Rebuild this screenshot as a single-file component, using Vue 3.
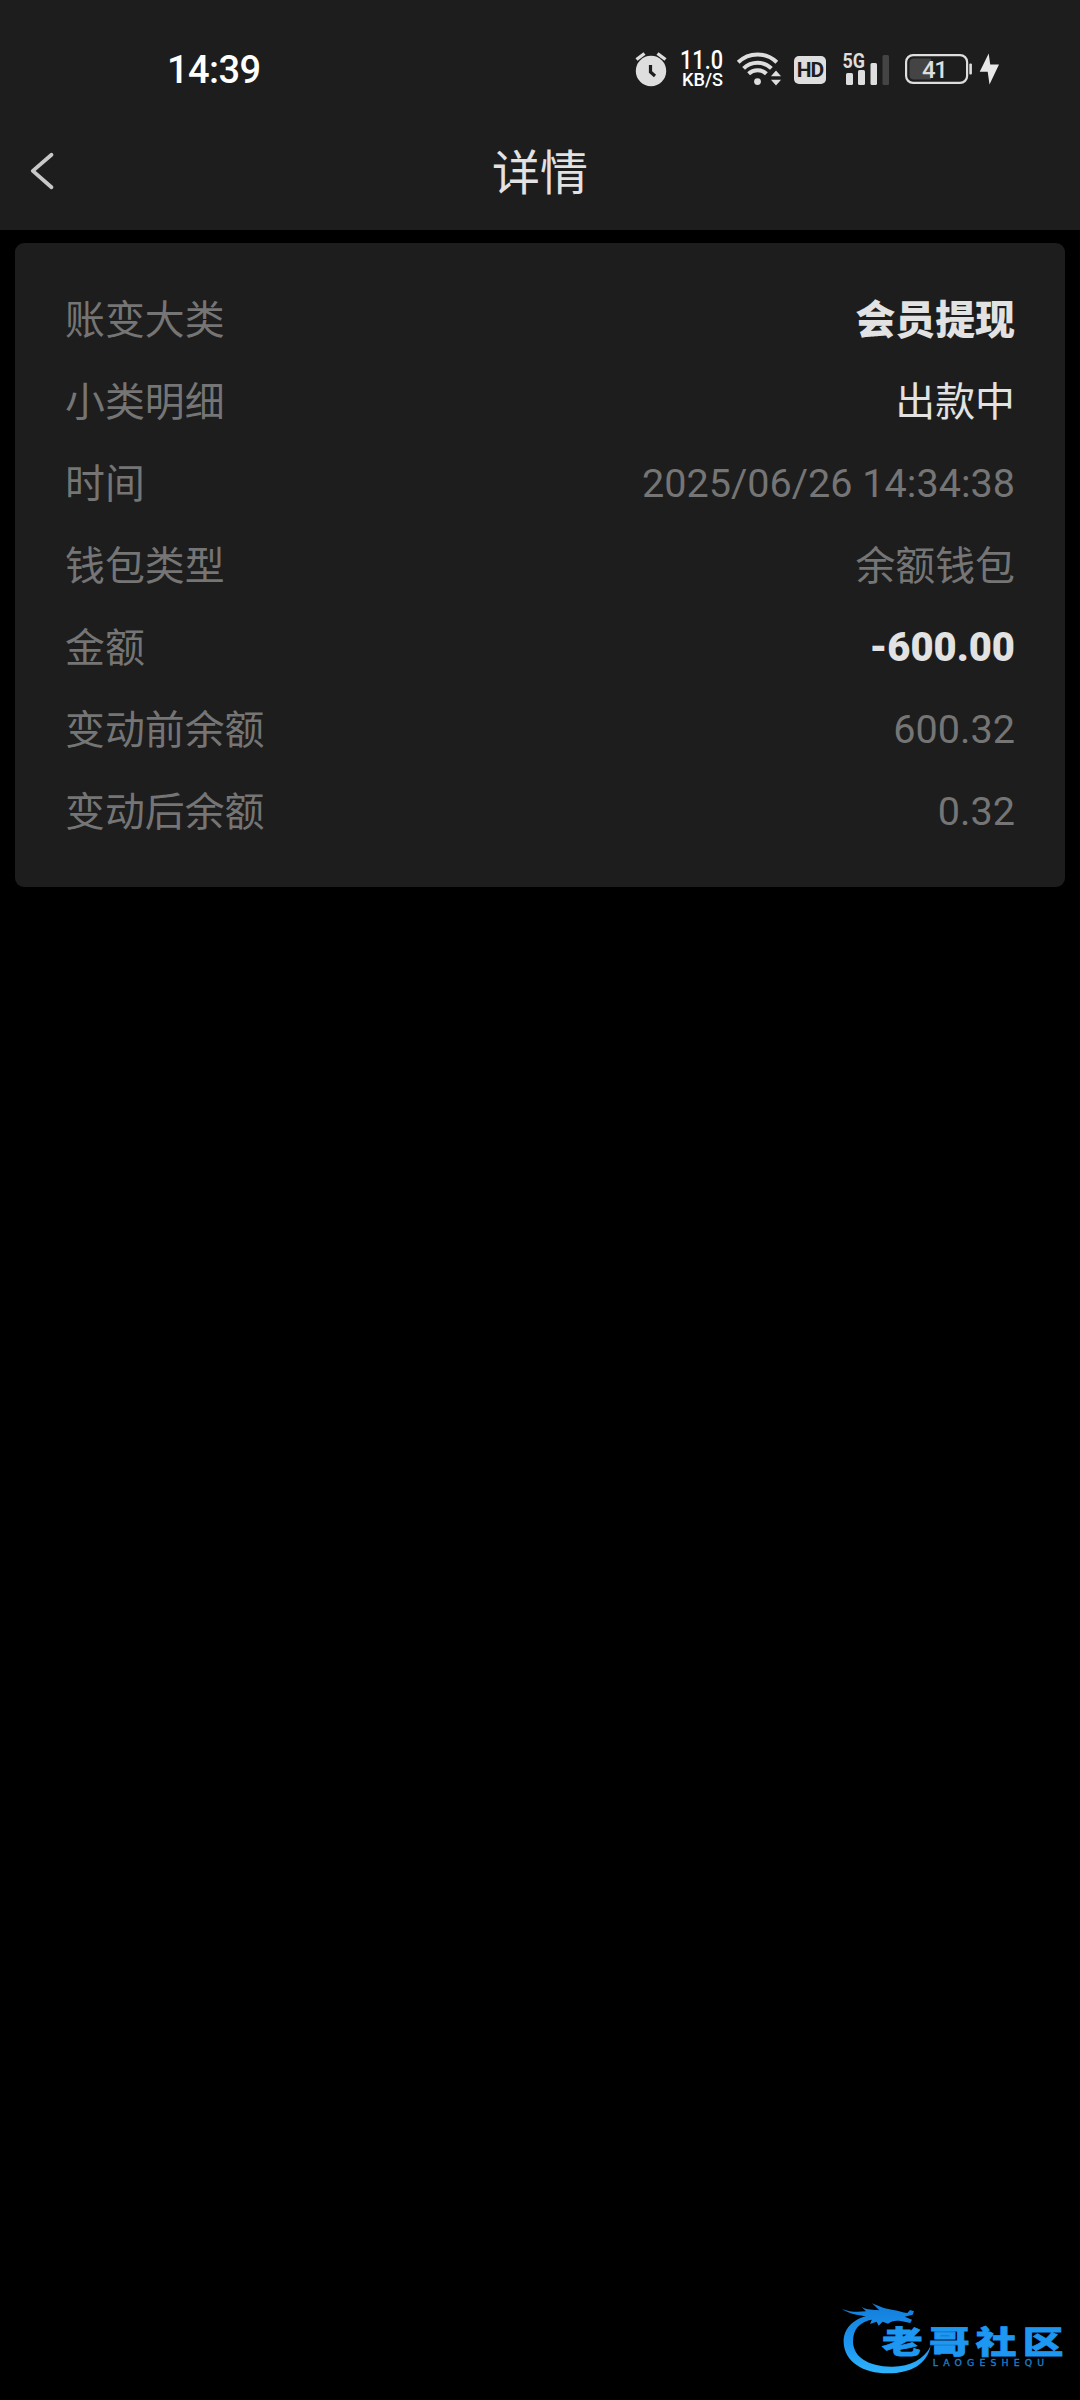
<script setup>
import { ref } from 'vue'

const rows = ref([
  { label: '账变大类', value: '会员提现', kind: 'strong' },
  { label: '小类明细', value: '出款中', kind: 'light' },
  { label: '时间', value: '2025/06/26 14:34:38', kind: 'number' },
  { label: '钱包类型', value: '余额钱包', kind: '' },
  { label: '金额', value: '-600.00', kind: 'strong amount' },
  { label: '变动前余额', value: '600.32', kind: 'number' },
  { label: '变动后余额', value: '0.32', kind: 'number' }
])
</script>

<template>
  <div class="screen">
    <header class="top">
      <div class="status-bar">
        <span class="clock">14:39</span>
        <div class="status-icons">
          <svg class="alarm" width="34" height="36" viewBox="634 51 34 36">
            <circle cx="651" cy="71" r="15.2" fill="#dedede" />
            <path d="M636.5 59.5L644.5 53.5M657.5 53.5L665.5 59.5" stroke="#dedede" stroke-width="3.4" />
            <path d="M650.5 65V72L655 76" fill="none" stroke="#1d1d1d" stroke-width="3.2" />
          </svg>
          <svg class="speed" width="44" height="46" viewBox="680 46 44 46" fill="#fff" font-weight="500">
            <text x="680" y="69" font-size="25.5" textLength="43" lengthAdjust="spacingAndGlyphs">11.0</text>
            <text x="682" y="86.4" font-size="18.5" textLength="41" lengthAdjust="spacingAndGlyphs">KB/S</text>
          </svg>
          <svg class="wifi" width="46" height="36" viewBox="736 51 46 36" fill="none" stroke="#dedede" stroke-width="4">
            <path d="M738.2 62.3A27.6 27.6 0 0 1 776.8 62.3" />
            <path d="M743.6 68.4A20 20 0 0 1 771.4 68.4" />
            <path d="M748.6 73.8A12.8 12.8 0 0 1 766.4 73.8" />
            <circle cx="757.5" cy="81.6" r="3.4" fill="#dedede" stroke="none" />
            <path d="M776 69.6L782.4 76.9H769.6ZM776 86.4L782.4 79.1H769.6Z" fill="#dedede" stroke="#1d1d1d" stroke-width="1.2" />
          </svg>
          <span class="hd">HD</span>
          <svg class="signal" width="48" height="46" viewBox="842 45 48 46" fill="#dedede">
            <text x="842.5" y="67" font-size="20.5" font-weight="700" textLength="22.5" lengthAdjust="spacingAndGlyphs">5G</text>
            <rect x="846" y="72" width="7" height="12" rx="1.5" />
            <rect x="858" y="69" width="7" height="15" rx="1.5" />
            <rect x="870.5" y="62" width="6.5" height="22" rx="1.5" />
            <rect x="882.5" y="54" width="6.5" height="30" rx="1.5" fill="#444" />
          </svg>
          <svg class="battery" width="69" height="34" viewBox="904 52 69 34">
            <rect x="906.1" y="55.1" width="61" height="27.8" rx="7" fill="none" stroke="#dedede" stroke-width="2.2" />
            <path d="M931 58.5H914Q909.5 58.5 909.5 63V75Q909.5 79.5 914 79.5H931Z" fill="#444" />
            <rect x="969.3" y="63.5" width="2.6" height="11" rx="1" fill="#dedede" />
            <text x="922" y="77.8" font-size="24" font-weight="500" fill="#dedede" textLength="26">41</text>
          </svg>
          <svg class="bolt" width="20" height="32" viewBox="979 53 20 32">
            <path d="M988.7 53.5L979.7 71.7H987.7L989.5 84.5L999 64.5H990.2Z" fill="#e8e8e8" />
          </svg>
        </div>
      </div>
      <div class="nav-bar">
        <svg class="back" width="26" height="40" viewBox="29 151 26 40">
          <path d="M51.5 153.8L32.8 169.9L51.5 186.3" fill="none" stroke="#c8c8c8" stroke-width="3.8" stroke-linecap="round" stroke-linejoin="round" />
        </svg>
        <h1>详情</h1>
      </div>
    </header>

    <main class="card">
      <div v-for="row in rows" :key="row.label" class="row">
        <span class="label">{{ row.label }}</span>
        <span class="value" :class="row.kind">{{ row.value }}</span>
      </div>
    </main>

    <footer class="brand">
      <svg width="250" height="110" viewBox="0 0 750 330">
        <defs>
          <linearGradient id="brandBlue" x1="0" y1="50" x2="0" y2="250" gradientUnits="userSpaceOnUse">
            <stop offset="0" stop-color="#1380dc" />
            <stop offset="0.6" stop-color="#1d97f2" />
            <stop offset="1" stop-color="#2fb4fb" />
          </linearGradient>
        </defs>
        <g fill="url(#brandBlue)">
          <!-- dragon body -->
          <path d="M118 76C65 88 40 118 41 158C44 214 98 250 174 250C244 250 291 222 302 168C282 208 240 231 184 230C114 229 70 200 69 155C69 120 86 96 130 88Z" />
          <!-- dragon head and mane -->
          <path d="M36 57C58 66 82 67 108 64L94 50C112 61 130 58 148 61L126 40C150 50 166 57 186 59C204 61 218 68 232 69L240 60L252 64L248 74L224 80L246 89L241 99L212 93C195 90 184 94 174 101L158 95L146 107L140 95L120 102L126 88L98 91L112 79C82 76 54 70 36 57Z" />
        </g>
        <g transform="translate(156 190) scale(1 0.76)">
          <text class="brand-name" x="0" y="0" textLength="544" lengthAdjust="spacing">老哥社区</text>
        </g>
        <text class="brand-latin" x="308" y="229" textLength="334" lengthAdjust="spacing">LAOGESHEQU</text>
      </svg>
    </footer>
  </div>
</template>

<style>
html,
body {
  margin: 0;
  background: #000;
}
</style>

<style scoped>
.screen {
  width: 1080px;
  height: 2400px;
  display: flex;
  flex-direction: column;
  background: #000;
  overflow: hidden;
  font-family: Roboto, 'Noto Sans CJK SC', sans-serif;
}

.top {
  height: 230px;
  background: #1d1d1d;
}

.status-bar {
  height: 114px;
  padding: 24px 81px 0 167px;
  box-sizing: border-box;
  display: flex;
  justify-content: space-between;
  align-items: center;
}

.clock {
  padding-top: 2px;
  color: #fff;
  font-size: 38px;
  font-weight: 500;
  letter-spacing: -0.6px;
}

.status-icons {
  display: flex;
  align-items: center;
}

.speed {
  margin-left: 12px;
}

.wifi {
  margin-left: 12px;
}

.hd {
  width: 32px;
  height: 28px;
  margin: 1px 0 0 12px;
  border-radius: 5px;
  background: #dedede;
  color: #1d1d1d;
  font-size: 21px;
  line-height: 28px;
  font-weight: 700;
  letter-spacing: -1px;
  text-align: center;
}

.signal {
  margin-left: 16px;
}

.battery {
  margin-left: 14px;
}

.bolt {
  margin-left: 6px;
}

.nav-bar {
  height: 116px;
  padding: 0 29px;
  display: flex;
  align-items: center;
}

.nav-bar h1 {
  flex: 1;
  margin: 0 26px 0 0;
  padding-top: 4px;
  color: #e2e2e2;
  font-size: 48px;
  font-weight: 400;
  line-height: 56px;
  text-align: center;
}

.card {
  height: 644px;
  margin: 13px 15px 0;
  padding: 37px 50px 33px;
  box-sizing: border-box;
  border-radius: 9px;
  background: #1d1d1d;
}

.row {
  height: 82px;
  display: flex;
  justify-content: space-between;
  align-items: center;
  color: #757575;
  font-size: 39.9px;
  line-height: 60px;
}

.value.number {
  padding-bottom: 2px;
  font-size: 39.6px;
}

.value.light {
  color: #e2e2e2;
}

.value.strong {
  color: #e2e2e2;
  font-weight: 800;
}

.value.amount {
  padding-bottom: 2px;
  font-weight: 900;
}

.brand {
  height: 110px;
  margin-top: auto;
  display: flex;
  justify-content: flex-end;
}

.brand-name {
  fill: #1d97f2;
  stroke: #1d97f2;
  stroke-width: 3;
  font-family: 'Noto Sans CJK SC', sans-serif;
  font-size: 122px;
  font-weight: 900;
}

.brand-latin {
  fill: #1b7fcb;
  stroke: #1b7fcb;
  stroke-width: 1;
  font-family: 'DejaVu Sans', sans-serif;
  font-size: 28px;
}
</style>
